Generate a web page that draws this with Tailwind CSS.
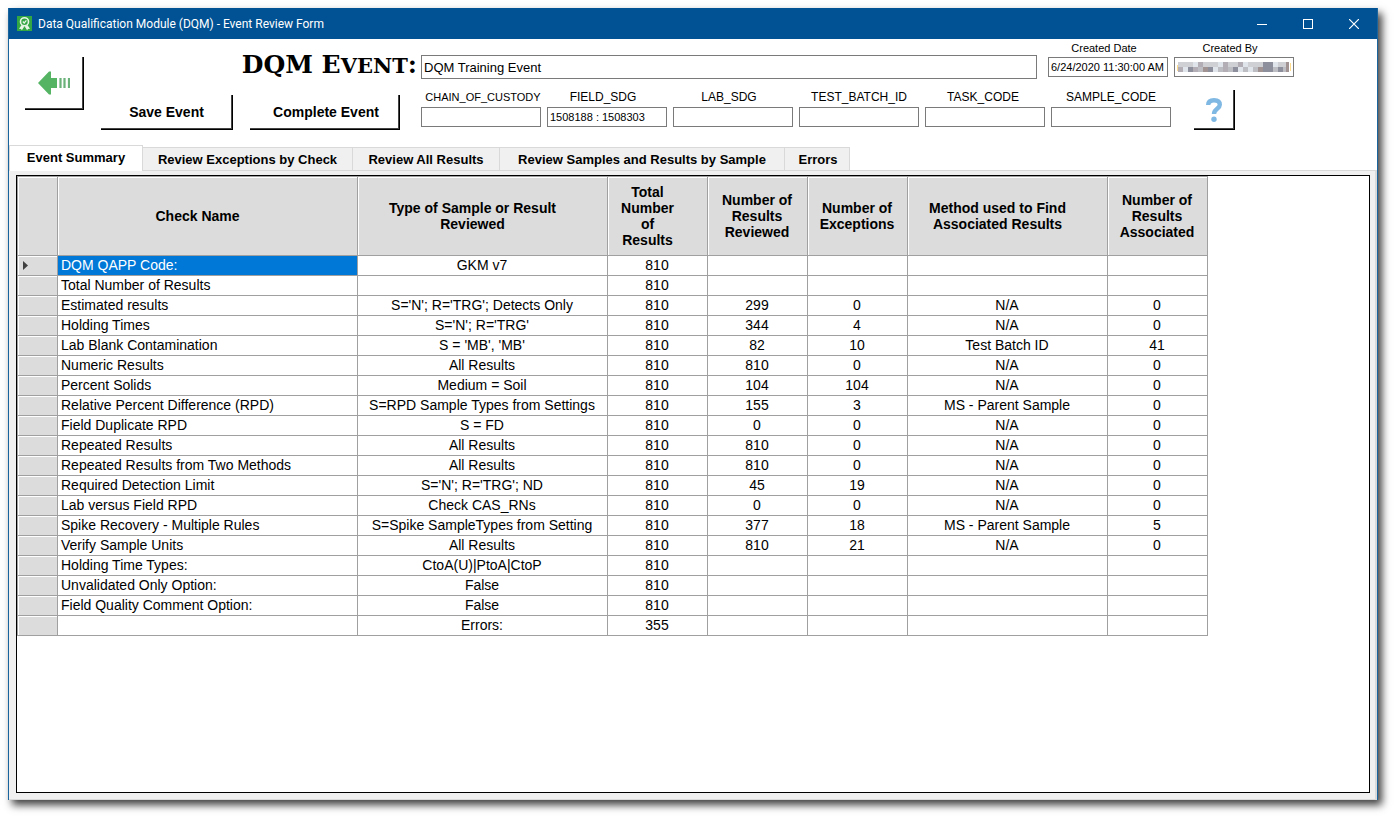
<!DOCTYPE html>
<html lang="en">
<head>
<meta charset="utf-8">
<title>Data Qualification Module (DQM) - Event Review Form</title>
<script src="https://cdn.jsdelivr.net/npm/@tailwindcss/browser@4"></script>
</head>
<body class="bg-white text-black font-['Liberation_Sans',sans-serif]">
<div class="flex h-screen min-w-[1320px] flex-col pt-2 pr-4 pb-4 pl-2">
<main class="flex min-h-0 flex-1 flex-col border-x border-[#1a649e] bg-white shadow-[4px_5px_8px_rgba(0,0,0,0.75)]">
  <header class="flex h-[31px] shrink-0 items-center bg-[#005294] pl-2 text-white">
    <svg class="h-[15px] w-[15px]" viewBox="0 0 15 15" aria-hidden="true">
      <rect width="15" height="15" fill="#33a743"/>
      <circle cx="7.5" cy="5.7" r="4" fill="none" stroke="#e6f5e6" stroke-width="1.6"/>
      <path d="M5.8 5.5l1.4 1.5 2.2-2.7" fill="none" stroke="#e6f5e6" stroke-width="1.2"/>
      <path d="M4.5 9L2 12.8l2 .1.9 1.4L7.3 10.4zM10.5 9l2.5 3.8-2 .1-.9 1.4-2.4-3.9z" fill="#e6f5e6"/>
    </svg>
    <h1 class="ml-[6px] flex-1 font-[Roboto,sans-serif] text-[12px] leading-4">Data Qualification Module (DQM) - Event Review Form</h1>
    <button aria-label="Minimize" class="flex h-full w-[46px] items-center justify-center"><svg width="10" height="10" shape-rendering="crispEdges"><path d="M0 5.500h10" stroke="#fff"/></svg></button>
    <button aria-label="Maximize" class="flex h-full w-[46px] items-center justify-center"><svg width="10" height="10"><rect x=".5" y=".5" width="9" height="9" fill="none" stroke="#fff"/></svg></button>
    <button aria-label="Close" class="flex h-full w-[46px] items-center justify-center"><svg width="10" height="10"><path d="M0 0l10 10M10 0L0 10" stroke="#fff" stroke-width="1.2"/></svg></button>
  </header>

  <section class="flex h-[106px] shrink-0 items-start pl-4">
    <button aria-label="Back" class="mt-[18px] flex h-[53px] w-[59px] items-center justify-center border-r border-b border-black shadow-[inset_-1px_-1px_0_#444]">
      <svg class="h-6 w-8" viewBox="0 0 32 24" aria-hidden="true">
        <path d="M0 12L11 .5h2V7h6v10h-6v6.500h-2z" fill="#54b463"/>
        <path d="M22.500 7v10M26.500 7v10M31 7v10" stroke="#6bb27a" stroke-width="2.200"/>
      </svg>
    </button>
    <div class="ml-[17px] w-[320px]">
      <h2 class="mt-[10px] h-[32px] pr-1 text-right font-['DejaVu_Serif',serif] text-[25px] leading-[32px] font-bold whitespace-nowrap">DQM E<span class="text-[21px]">VENT</span>:</h2>
      <div class="mt-[14px] flex gap-[17px]">
        <button class="h-[35px] w-[132px] border-r border-b border-black pt-px text-[14px] font-bold shadow-[inset_-1px_-1px_0_#444]">Save Event</button>
        <button class="h-[35px] w-[150px] border-r border-b border-black pt-px pl-[3px] text-[14px] font-bold shadow-[inset_-1px_-1px_0_#444]">Complete Event</button>
      </div>
    </div>
    <div>
      <div class="flex items-end">
        <input aria-label="DQM Event" value="DQM Training Event" class="mt-4 h-[24px] w-[616px] border border-[#7a7a7a] px-[2px] text-[13px]">
        <label class="ml-[11px] flex w-[120px] flex-col text-center text-[11px] leading-4"><span class="pr-2">Created Date</span><input value="6/24/2020 11:30:00 AM" class="mt-px mb-[2px] h-5 border border-[#7a7a7a] px-[2px] text-[11px]"></label>
        <div class="ml-[6px] flex w-[120px] flex-col text-center text-[11px] leading-4"><span class="pr-2">Created By</span>
          <div class="mt-px mb-[2px] flex h-5 items-center border border-[#7a7a7a] px-[2px]" role="img" aria-label="Redacted user name">
            <svg class="h-[10px] w-full" viewBox="0 0 114 10" preserveAspectRatio="none" shape-rendering="crispEdges">
              <path fill="#cfd0d4" d="M1 0h110v5H1z"/>
              <path fill="#bdbec3" d="M1 5h110v5H1z"/>
              <path fill="#dfe5ea" d="M16 0h5v5h-5zM41 0h5v5h-5zM66 0h5v5h-5zM96 0h5v5h-5zM6 5h5v5H6zM61 5h5v5h-5zM36 5h5v5h-5zM71 5h5v5h-5z"/>
              <path fill="#b3aeb6" d="M21 0h5v5h-5zM46 0h5v5h-5zM61 0h5v5h-5zM1 5h5v5H1zM16 5h5v5h-5zM46 5h5v5h-5z"/>
              <path fill="#8d8f9c" d="M11 5h5v5h-5zM31 5h5v5h-5zM56 5h5v5h-5zM86 0h10v10H86zM101 5h5v5h-5z"/>
              <path fill="#a19391" d="M26 5h5v5h-5zM81 5h5v5h-5zM109 0h3v10h-3z"/>
              <path fill="#ffdc8c" d="M0 3h1v6H0zM113 1h1v8h-1z"/>
            </svg>
          </div>
        </div>
      </div>
      <div class="mt-[10px] flex gap-[6px] text-center text-[12px] leading-4">
        <label class="flex w-[120px] flex-col"><span class="pl-1 text-[11px]">CHAIN_OF_CUSTODY</span><input class="mt-[2px] h-5 border border-[#7a7a7a] px-[2px] text-[11px]"></label>
        <label class="flex w-[120px] flex-col"><span class="pr-2">FIELD_SDG</span><input value="1508188 : 1508303" class="mt-[2px] h-5 border border-[#7a7a7a] px-[2px] text-[11px]"></label>
        <label class="flex w-[120px] flex-col"><span class="pr-2">LAB_SDG</span><input class="mt-[2px] h-5 border border-[#7a7a7a] px-[2px] text-[11px]"></label>
        <label class="flex w-[120px] flex-col"><span>TEST_BATCH_ID</span><input class="mt-[2px] h-5 border border-[#7a7a7a] px-[2px] text-[11px]"></label>
        <label class="flex w-[120px] flex-col"><span class="pr-1">TASK_CODE</span><input class="mt-[2px] h-5 border border-[#7a7a7a] px-[2px] text-[11px]"></label>
        <label class="flex w-[120px] flex-col"><span>SAMPLE_CODE</span><input class="mt-[2px] h-5 border border-[#7a7a7a] px-[2px] text-[11px]"></label>
        <button aria-label="Help" class="mt-px ml-[17px] flex h-[40px] w-[41px] items-center justify-center border-r border-b border-black shadow-[inset_-1px_-1px_0_#444]">
          <svg class="h-6 w-4" viewBox="0 0 16 24" aria-hidden="true"><path d="M2.200 7C2.200 3.500 4.500 2.200 8 2.200s5.800 1.600 5.800 4.600c0 4-5.800 4.200-5.800 9.200" fill="none" stroke="#7fb8e2" stroke-width="4.400"/><circle cx="8" cy="21.200" r="2.700" fill="#7fb8e2"/></svg>
        </button>
      </div>
    </div>
  </section>

  <div role="tablist" class="flex h-[26px] shrink-0 items-end text-[13px] font-bold">
    <button role="tab" aria-selected="true" class="h-[26px] w-[134px] border-x border-t border-[#d9d9d9] bg-white pb-[2px]">Event Summary</button>
    <button role="tab" class="h-6 w-[210px] border-y border-r border-[#d9d9d9] bg-[#f0f0f0] pt-[2px]">Review Exceptions by Check</button>
    <button role="tab" class="h-6 w-[147px] border-y border-r border-[#d9d9d9] bg-[#f0f0f0] pt-[2px]">Review All Results</button>
    <button role="tab" class="h-6 w-[285px] border-y border-r border-[#d9d9d9] bg-[#f0f0f0] pt-[2px]">Review Samples and Results by Sample</button>
    <button role="tab" class="h-6 w-[65px] border-y border-r border-[#d9d9d9] bg-[#f0f0f0] pt-[2px] pl-[2px]">Errors</button>
    <span class="flex-1 border-b border-[#d9d9d9]"></span>
  </div>
  <div class="flex min-h-0 flex-1 flex-col border-r-2 border-b border-[#d9d9d9] bg-[#f0f0f0] pt-1 pr-[5px] pb-[6px] pl-[7px]">
    <div class="min-h-0 flex-1 overflow-hidden border border-black bg-white">
      <table class="w-[1191px] table-fixed border-separate border-spacing-0 border-l border-t border-[#a0a0a0] text-center text-[14px] leading-4">
        <colgroup><col class="w-[40px]"><col class="w-[300px]"><col class="w-[250px]"><col class="w-[100px]"><col class="w-[100px]"><col class="w-[100px]"><col class="w-[200px]"><col class="w-[100px]"></colgroup>
        <thead><tr id="head" class="h-[79px] bg-[#dcdcdc]"></tr></thead>
        <tbody id="rows"></tbody>
      </table>
    </div>
  </div>
</main>
</div>
<script>
const heads = ["", "Check Name", "Type of Sample or Result<br>Reviewed", "Total<br>Number<br>of<br>Results", "Number of<br>Results<br>Reviewed", "Number of<br>Exceptions", "Method used to Find<br>Associated Results", "Number of<br>Results<br>Associated"];
document.getElementById("head").innerHTML = heads.map((h, i) =>
  `<th scope="col" class="border-r border-b border-[#a0a0a0] p-0 font-bold shadow-[inset_1px_1px_0_#fff] ${i ? "pr-5" : ""} ${i > 3 && i !== 6 ? "pr-px" : ""}">${h}</th>`).join("");
const rows = [
  ["DQM QAPP Code:", "GKM v7", "810", "", "", "", ""],
  ["Total Number of Results", "", "810", "", "", "", ""],
  ["Estimated results", "S='N'; R='TRG'; Detects Only", "810", "299", "0", "N/A", "0"],
  ["Holding Times", "S='N'; R='TRG'", "810", "344", "4", "N/A", "0"],
  ["Lab Blank Contamination", "S = 'MB', 'MB'", "810", "82", "10", "Test Batch ID", "41"],
  ["Numeric Results", "All Results", "810", "810", "0", "N/A", "0"],
  ["Percent Solids", "Medium = Soil", "810", "104", "104", "N/A", "0"],
  ["Relative Percent Difference (RPD)", "S=RPD Sample Types from Settings", "810", "155", "3", "MS - Parent Sample", "0"],
  ["Field Duplicate RPD", "S = FD", "810", "0", "0", "N/A", "0"],
  ["Repeated Results", "All Results", "810", "810", "0", "N/A", "0"],
  ["Repeated Results from Two Methods", "All Results", "810", "810", "0", "N/A", "0"],
  ["Required Detection Limit", "S='N'; R='TRG'; ND", "810", "45", "19", "N/A", "0"],
  ["Lab versus Field RPD", "Check CAS_RNs", "810", "0", "0", "N/A", "0"],
  ["Spike Recovery - Multiple Rules", "S=Spike SampleTypes from Setting", "810", "377", "18", "MS - Parent Sample", "5"],
  ["Verify Sample Units", "All Results", "810", "810", "21", "N/A", "0"],
  ["Holding Time Types:", "CtoA(U)|PtoA|CtoP", "810", "", "", "", ""],
  ["Unvalidated Only Option:", "False", "810", "", "", "", ""],
  ["Field Quality Comment Option:", "False", "810", "", "", "", ""],
  ["", "Errors:", "355", "", "", "", ""]
];
const marker = '<svg class="ml-[5px] h-[9px] w-[6px]" viewBox="0 0 6 9" aria-hidden="true"><path d="M0 0l5 4.500L0 9z" fill="#404040"/></svg>';
document.getElementById("rows").innerHTML = rows.map((r, n) =>
  `<tr class="h-5"><th class="border-r border-b border-[#a0a0a0] bg-[#dcdcdc] p-0 shadow-[inset_1px_1px_0_#fff]">${n ? "" : marker}</th>` +
  r.map((c, i) => `<td class="border-r border-b border-[#a0a0a0] p-0 pb-[2px] ${i ? "pr-px" : "pl-[3px] text-left"} ${!n && !i ? "bg-[#0078d7] text-white" : ""}">${c}</td>`).join("") + "</tr>").join("");
</script>
</body>
</html>
